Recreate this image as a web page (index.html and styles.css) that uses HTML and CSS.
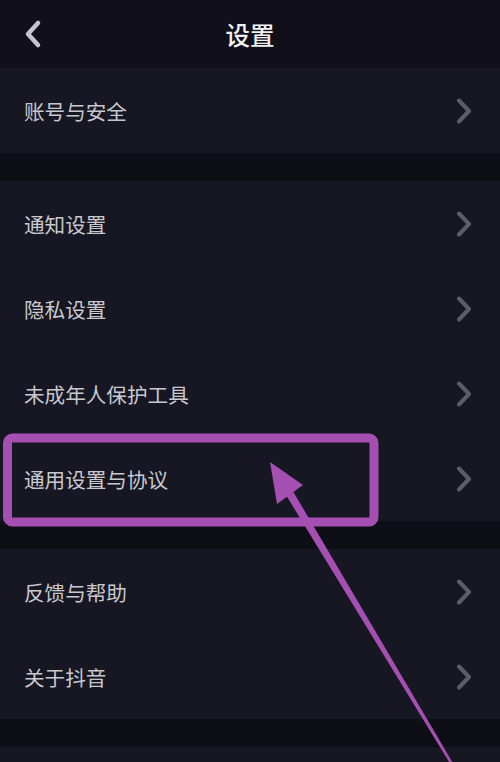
FILE: index.html
```html
<!DOCTYPE html>
<html lang="zh-CN">
<head>
    <meta charset="UTF-8">
    <meta name="viewport" content="width=device-width, initial-scale=1.0">
    <title>设置</title>
    <link rel="stylesheet" href="styles.css">
</head>
<body>

    <div class="header">
        <svg class="back" width="20" height="30" viewBox="0 0 20 30">
            <path d="M15 4 L5 15 L15 26" fill="none" stroke="#c4c4cc" stroke-width="4.5" stroke-linecap="round" stroke-linejoin="round"/>
        </svg>
        <h1>设置</h1>
    </div>

    <div class="group">
        <div class="row"><span>账号与安全</span><svg class="arrow" viewBox="0 0 16 26"><path d="M3 2.5 L13 13 L3 23.5"/></svg></div>
    </div>

    <div class="group">
        <div class="row"><span>通知设置</span><svg class="arrow" viewBox="0 0 16 26"><path d="M3 2.5 L13 13 L3 23.5"/></svg></div>
        <div class="row"><span>隐私设置</span><svg class="arrow" viewBox="0 0 16 26"><path d="M3 2.5 L13 13 L3 23.5"/></svg></div>
        <div class="row"><span>未成年人保护工具</span><svg class="arrow" viewBox="0 0 16 26"><path d="M3 2.5 L13 13 L3 23.5"/></svg></div>
        <div class="row"><span>通用设置与协议</span><svg class="arrow" viewBox="0 0 16 26"><path d="M3 2.5 L13 13 L3 23.5"/></svg></div>
    </div>

    <div class="group">
        <div class="row"><span>反馈与帮助</span><svg class="arrow" viewBox="0 0 16 26"><path d="M3 2.5 L13 13 L3 23.5"/></svg></div>
        <div class="row"><span>关于抖音</span><svg class="arrow" viewBox="0 0 16 26"><path d="M3 2.5 L13 13 L3 23.5"/></svg></div>
    </div>

    <div class="group last"></div>

    <!-- annotation drawn over the list -->
    <svg class="mark" width="500" height="762" viewBox="0 0 500 762">
        <rect x="7.5" y="438" width="366.5" height="84" rx="5" fill="none" stroke="#a64fb2" stroke-width="9"/>
        <polygon points="286.6,496.1 293.4,491.9 457,770 454,770" fill="#a64fb2"/>
        <polygon points="270,462 303,485 277,504" fill="#a64fb2"/>
    </svg>

</body>
</html>
```

FILE: styles.css
```css
body {
    margin: 0;
    padding: 0;
    width: 500px;
    height: 762px;
    overflow: hidden;
    position: relative;
    background-color: #0e0e17;
    font-family: "Noto Sans CJK SC", "Noto Sans", sans-serif;
    color: #c8c8ce;
}
.header {
    height: 68px;
    background-color: #100f1a;
    display: flex;
    align-items: center;
    justify-content: center;
    position: relative;
}
.header h1 {
    margin: 0;
    font-size: 24.5px;
    font-weight: 500;
    color: #f2f2f4;
}
.header .back {
    position: absolute;
    left: 23px;
    top: 19px;
}
.group {
    background-color: #161722;
    margin-bottom: 28px;
}
.group.last {
    height: 20px;
    margin-bottom: 0;
}
.row {
    height: 85px;
    display: flex;
    align-items: center;
    justify-content: space-between;
    padding: 0 28px 0 24px;
    font-size: 20.6px;
}
.arrow {
    width: 16px;
    height: 26px;
    fill: none;
    stroke: #5c5d68;
    stroke-width: 4;
    stroke-linecap: round;
    stroke-linejoin: round;
}
.mark {
    position: absolute;
    top: 0;
    left: 0;
    pointer-events: none;
}
```
